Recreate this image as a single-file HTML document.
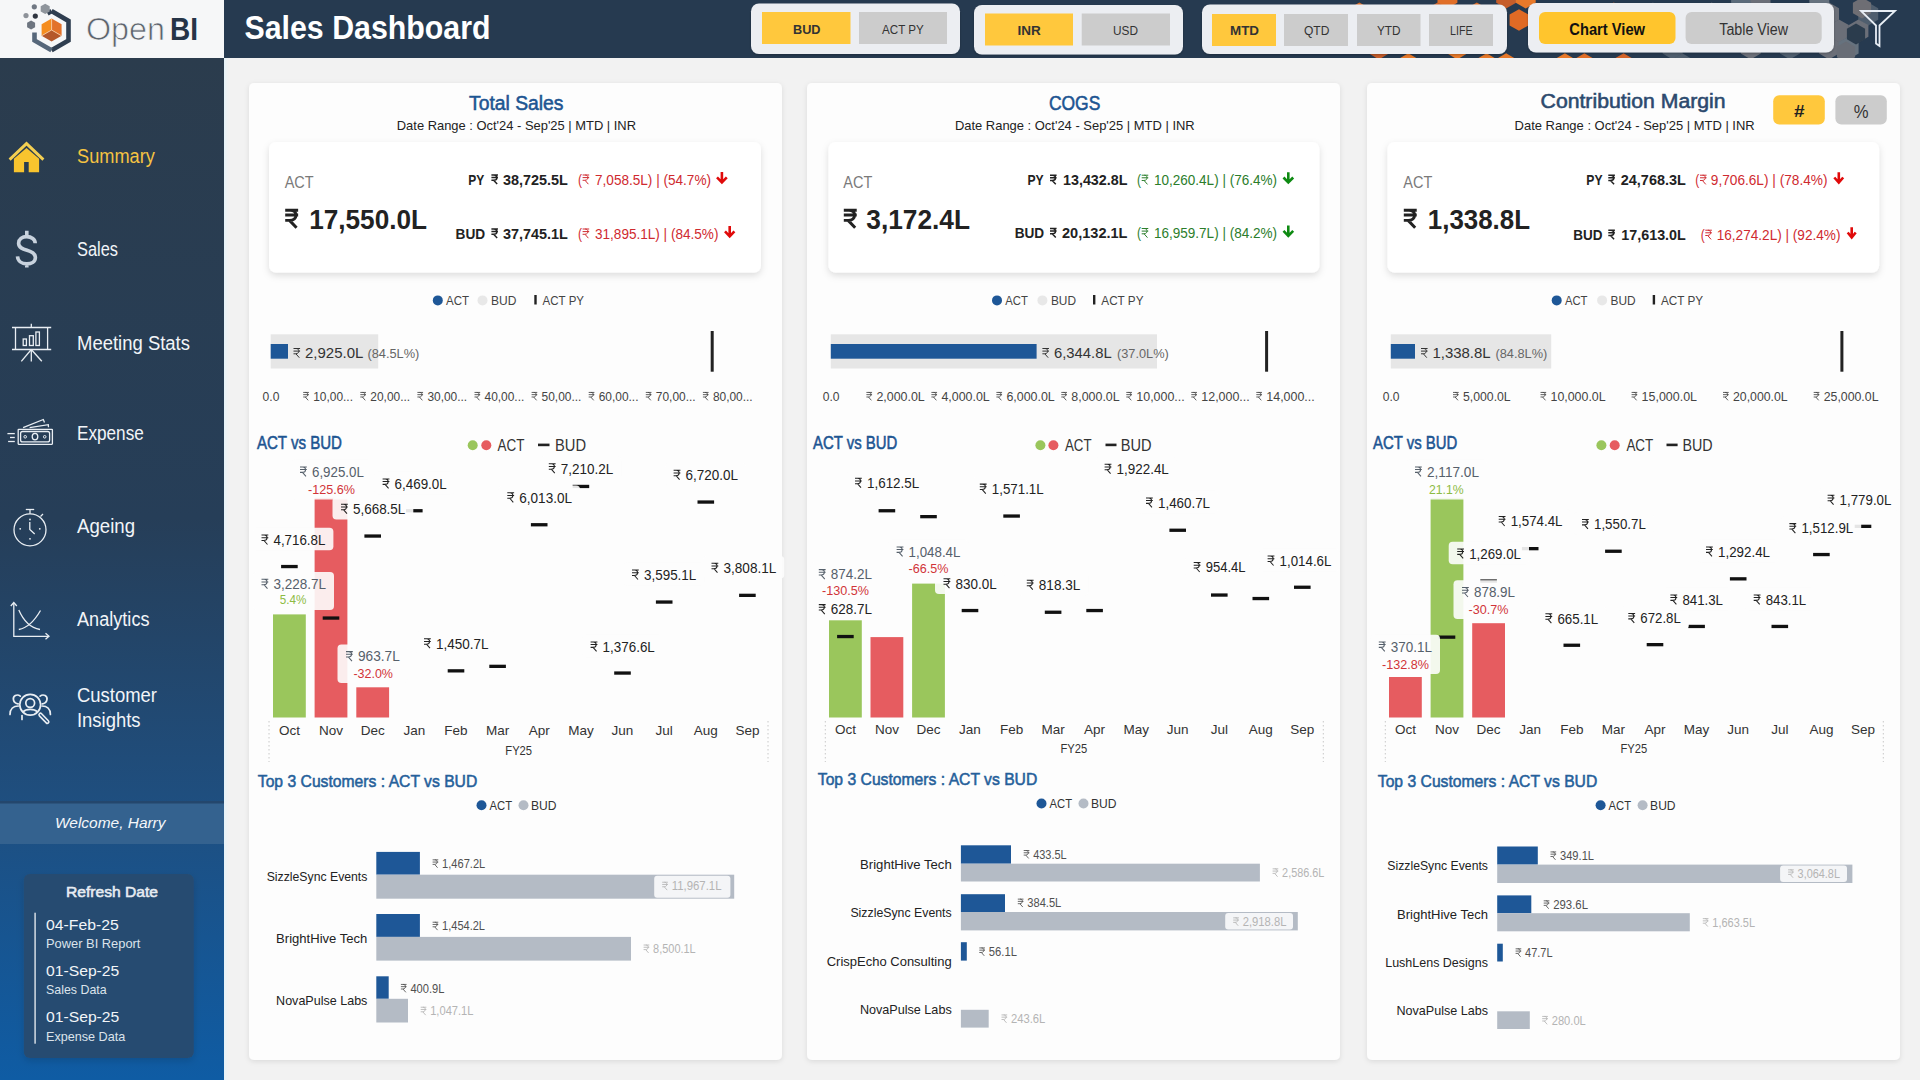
<!DOCTYPE html><html><head><meta charset="utf-8"><title>Sales Dashboard</title>
<style>html,body{margin:0;padding:0;width:1920px;height:1080px;overflow:hidden;background:#f2f2f2}svg{display:block;font-family:"Liberation Sans",sans-serif}</style></head><body>
<svg width="1920" height="1080" viewBox="0 0 1920 1080">
<defs>
<symbol id="rr" viewBox="0 0 66 100" overflow="visible"><path d="M0,5 H66 M0,31 H66 M26,5 C64,5 64,58 22,58 H0 M24,58 L58,97" fill="none" stroke="currentColor" stroke-width="10"/></symbol>
<symbol id="rb" viewBox="0 0 66 100" overflow="visible"><path d="M0,6 H66 M0,31 H66 M26,6 C66,6 66,58 22,58 H0 M22,58 L58,96" fill="none" stroke="currentColor" stroke-width="15"/></symbol>
<linearGradient id="sbg" x1="0" y1="0" x2="0" y2="1"><stop offset="0" stop-color="#2b3c4d"/><stop offset="0.45" stop-color="#263e58"/><stop offset="0.72" stop-color="#1f4e7e"/><stop offset="1" stop-color="#0f5ca4"/></linearGradient>
<filter id="csh" x="-5%" y="-5%" width="110%" height="110%"><feDropShadow dx="0" dy="1.5" stdDeviation="2.5" flood-color="#000" flood-opacity="0.10"/></filter>
<filter id="ksh" x="-5%" y="-10%" width="110%" height="125%"><feDropShadow dx="0" dy="3" stdDeviation="3.5" flood-color="#000" flood-opacity="0.13"/></filter>
<filter id="gsh" x="-5%" y="-10%" width="110%" height="130%"><feDropShadow dx="0" dy="1" stdDeviation="1.2" flood-color="#000" flood-opacity="0.25"/></filter>
<clipPath id="hclip"><rect x="0" y="0" width="1920" height="58"/></clipPath>
</defs>
<rect x="0.0" y="0.0" width="1920.0" height="1080.0" fill="#f2f2f2"/>
<rect x="0.0" y="0.0" width="1920.0" height="58.0" fill="#263a50"/>
<g clip-path="url(#hclip)">
<polygon points="1457.4,2.7 1447.4,8.5 1437.5,2.7 1437.5,-8.8 1447.4,-14.5 1457.4,-8.8" fill="#e06e28"/>
<polygon points="1516.1,2.7 1506.1,8.5 1496.2,2.7 1496.2,-8.8 1506.1,-14.5 1516.1,-8.8" fill="#c65d2a"/>
<polygon points="1535.7,2.7 1525.7,8.5 1515.8,2.7 1515.8,-8.8 1525.7,-14.5 1535.7,-8.8" fill="#e8792a"/>
<polygon points="1751.0,2.7 1741.0,8.5 1731.1,2.7 1731.1,-8.8 1741.0,-14.5 1751.0,-8.8" fill="#5b6b7b"/>
<polygon points="1770.5,2.7 1760.6,8.5 1750.6,2.7 1750.6,-8.8 1760.6,-14.5 1770.5,-8.8" fill="#6b6f78"/>
<polygon points="1829.3,2.7 1819.3,8.5 1809.3,2.7 1809.3,-8.8 1819.3,-14.5 1829.3,-8.8" fill="#66727e"/>
<polygon points="1369.3,19.7 1359.4,25.5 1349.4,19.7 1349.4,8.2 1359.4,2.5 1369.3,8.2" fill="#e06e28"/>
<polygon points="1447.6,19.7 1437.6,25.5 1427.7,19.7 1427.7,8.2 1437.6,2.5 1447.6,8.2" fill="#d4642a"/>
<polygon points="1486.8,19.7 1476.8,25.5 1466.8,19.7 1466.8,8.2 1476.8,2.5 1486.8,8.2" fill="#e06e28"/>
<polygon points="1623.8,19.7 1613.8,25.5 1603.8,19.7 1603.8,8.2 1613.8,2.5 1623.8,8.2" fill="#d4642a"/>
<polygon points="1662.9,19.7 1652.9,25.5 1643.0,19.7 1643.0,8.2 1652.9,2.5 1662.9,8.2" fill="#4f5e6e"/>
<polygon points="1721.6,19.7 1711.7,25.5 1701.7,19.7 1701.7,8.2 1711.7,2.5 1721.6,8.2" fill="#6b6f78"/>
<polygon points="1760.8,19.7 1750.8,25.5 1740.8,19.7 1740.8,8.2 1750.8,2.5 1760.8,8.2" fill="#5b6b7b"/>
<polygon points="1780.3,19.7 1770.4,25.5 1760.4,19.7 1760.4,8.2 1770.4,2.5 1780.3,8.2" fill="#5b6b7b"/>
<polygon points="1839.0,19.7 1829.1,25.5 1819.1,19.7 1819.1,8.2 1829.1,2.5 1839.0,8.2" fill="#6b6f78"/>
<polygon points="1878.2,19.7 1868.2,25.5 1858.3,19.7 1858.3,8.2 1868.2,2.5 1878.2,8.2" fill="#4f5e6e"/>
<polygon points="1359.5,36.7 1349.6,42.4 1339.6,36.7 1339.6,25.2 1349.6,19.4 1359.5,25.1" fill="#d4642a"/>
<polygon points="1457.4,36.7 1447.4,42.4 1437.5,36.7 1437.5,25.2 1447.4,19.4 1457.4,25.1" fill="#e06e28"/>
<polygon points="1477.0,36.7 1467.0,42.4 1457.0,36.7 1457.0,25.2 1467.0,19.4 1477.0,25.1" fill="#e8792a"/>
<polygon points="1496.5,36.7 1486.6,42.4 1476.6,36.7 1476.6,25.2 1486.6,19.4 1496.5,25.1" fill="#c65d2a"/>
<polygon points="1574.8,36.7 1564.9,42.4 1554.9,36.7 1554.9,25.2 1564.9,19.4 1574.8,25.1" fill="#d4642a"/>
<polygon points="1594.4,36.7 1584.4,42.4 1574.5,36.7 1574.5,25.2 1584.4,19.4 1594.4,25.1" fill="#ee8a2c"/>
<polygon points="1614.0,36.7 1604.0,42.4 1594.1,36.7 1594.1,25.2 1604.0,19.4 1614.0,25.1" fill="#e06e28"/>
<polygon points="1653.1,36.7 1643.2,42.4 1633.2,36.7 1633.2,25.2 1643.2,19.4 1653.1,25.1" fill="#5b6b7b"/>
<polygon points="1672.7,36.7 1662.7,42.4 1652.8,36.7 1652.8,25.2 1662.7,19.4 1672.7,25.1" fill="#6b6f78"/>
<polygon points="1711.8,36.7 1701.9,42.4 1691.9,36.7 1691.9,25.2 1701.9,19.4 1711.8,25.1" fill="#66727e"/>
<polygon points="1731.4,36.7 1721.4,42.4 1711.5,36.7 1711.5,25.2 1721.4,19.4 1731.4,25.1" fill="#66727e"/>
<polygon points="1848.8,36.7 1838.9,42.4 1828.9,36.7 1828.9,25.2 1838.9,19.4 1848.8,25.1" fill="#6b6f78"/>
<polygon points="1868.4,36.7 1858.4,42.4 1848.5,36.7 1848.5,25.2 1858.4,19.4 1868.4,25.1" fill="#6b6f78"/>
<polygon points="1388.9,53.6 1378.9,59.4 1369.0,53.6 1369.0,42.1 1378.9,36.4 1388.9,42.1" fill="#c65d2a"/>
<polygon points="1467.2,53.6 1457.2,59.4 1447.3,53.6 1447.3,42.1 1457.2,36.4 1467.2,42.1" fill="#e8792a"/>
<polygon points="1682.5,53.6 1672.5,59.4 1662.6,53.6 1662.6,42.1 1672.5,36.4 1682.5,42.1" fill="#4f5e6e"/>
<polygon points="1760.8,53.6 1750.8,59.4 1740.8,53.6 1740.8,42.1 1750.8,36.4 1760.8,42.1" fill="#6b6f78"/>
<polygon points="1799.9,53.6 1789.9,59.4 1780.0,53.6 1780.0,42.1 1789.9,36.4 1799.9,42.1" fill="#4f5e6e"/>
<polygon points="1839.0,53.6 1829.1,59.4 1819.1,53.6 1819.1,42.1 1829.1,36.4 1839.0,42.1" fill="#6b6f78"/>
<polygon points="1858.6,53.6 1848.7,59.4 1838.7,53.6 1838.7,42.1 1848.7,36.4 1858.6,42.1" fill="#66727e"/>
<polygon points="1418.2,70.6 1408.3,76.3 1398.3,70.6 1398.3,59.1 1408.3,53.3 1418.2,59.1" fill="#e8792a"/>
<polygon points="1496.5,70.6 1486.6,76.3 1476.6,70.6 1476.6,59.1 1486.6,53.3 1496.5,59.1" fill="#e8792a"/>
<polygon points="1516.1,70.6 1506.1,76.3 1496.2,70.6 1496.2,59.1 1506.1,53.3 1516.1,59.1" fill="#e8792a"/>
<polygon points="1574.8,70.6 1564.9,76.3 1554.9,70.6 1554.9,59.1 1564.9,53.3 1574.8,59.1" fill="#e8792a"/>
<polygon points="1594.4,70.6 1584.4,76.3 1574.5,70.6 1574.5,59.1 1584.4,53.3 1594.4,59.1" fill="#e06e28"/>
<polygon points="1633.5,70.6 1623.6,76.3 1613.6,70.6 1613.6,59.1 1623.6,53.3 1633.5,59.1" fill="#d4642a"/>
<polygon points="1692.3,70.6 1682.3,76.3 1672.3,70.6 1672.3,59.1 1682.3,53.3 1692.3,59.1" fill="#4f5e6e"/>
<polygon points="1528.4,25.4 1519.0,30.8 1509.6,25.4 1509.6,14.6 1519.0,9.2 1528.4,14.6" fill="#e06a25"/>
<polygon points="1865.1,39.2 1856.0,44.5 1846.9,39.2 1846.9,28.8 1856.0,23.5 1865.1,28.7" fill="#2b3c4d"/>
<polygon points="1871.1,13.2 1862.0,18.5 1852.9,13.2 1852.9,2.7 1862.0,-2.5 1871.1,2.7" fill="#6e6e74"/>
<polygon points="1855.1,57.2 1846.0,62.5 1836.9,57.2 1836.9,46.8 1846.0,41.5 1855.1,46.7" fill="#686d76"/>
</g>
<rect x="0.0" y="0.0" width="224.0" height="58.0" fill="#f6f7f8"/>
<polyline points="51.5,11.1 68.5,20.9 68.5,40.5 51.5,50.3" fill="none" stroke="#2f3e50" stroke-width="4.6" stroke-linejoin="miter"/>
<polyline points="51.5,50.3 34.5,40.5 34.5,32.5" fill="none" stroke="#56677a" stroke-width="4.6" stroke-linejoin="miter"/>
<line x1="51.5" y1="11.1" x2="47.5" y2="13.4" stroke="#2f3e50" stroke-width="4.6"/>
<polygon points="51.6,18.4 51.6,30.0 41.6,35.8 41.6,24.2" fill="#f58d1f"/>
<polygon points="51.6,18.4 61.6,24.2 61.6,35.8 51.6,30.0" fill="#e2722a"/>
<polygon points="51.6,30.0 61.6,35.8 51.6,41.6 41.6,35.8" fill="#b5582b"/>
<polyline points="51.6,18.4 51.6,30.0 41.6,35.8" fill="none" stroke="#f6c9a0" stroke-width="0.9"/><line x1="51.6" y1="30.0" x2="61.6" y2="35.8" stroke="#f6c9a0" stroke-width="0.9"/>
<circle cx="34.3" cy="6.8" r="2.6" fill="#707883"/>
<circle cx="26" cy="15.6" r="2.6" fill="#8d9299"/>
<circle cx="35.3" cy="16.1" r="2.6" fill="#2f3540"/>
<polygon points="49.7,11.5 45.2,14.1 40.7,11.5 40.7,6.3 45.2,3.7 49.7,6.3" fill="#8f959c"/>
<polygon points="35.1,27.3 31.1,29.6 27.1,27.3 27.1,22.7 31.1,20.4 35.1,22.7" fill="#6d7580"/>
<text x="86.0" y="40.0" font-size="31" fill="#5d646d" textLength="79.0" lengthAdjust="spacingAndGlyphs" stroke="#f6f7f8" stroke-width="0.7">Open</text>
<text x="170.0" y="40.0" font-size="31" fill="#263447" font-weight="bold" textLength="28.0" lengthAdjust="spacingAndGlyphs">BI</text>
<text x="244.5" y="38.8" font-size="34" fill="#ffffff" font-weight="bold" textLength="246.0" lengthAdjust="spacingAndGlyphs">Sales Dashboard</text>
<rect x="751.0" y="3.5" width="209.0" height="50.5" fill="#eceef2" rx="8" filter="url(#gsh)"/>
<rect x="762.0" y="12.0" width="88.5" height="32.0" fill="#ffc83d"/>
<text x="793.0" y="34.3" font-size="13.5" fill="#333" font-weight="bold" textLength="27.5" lengthAdjust="spacingAndGlyphs">BUD</text>
<rect x="859.0" y="12.0" width="88.0" height="32.0" fill="#cccccc"/>
<text x="882.0" y="34.3" font-size="13.5" fill="#333" textLength="41.8" lengthAdjust="spacingAndGlyphs">ACT PY</text>
<rect x="974.0" y="5.0" width="209.0" height="49.5" fill="#eceef2" rx="8" filter="url(#gsh)"/>
<rect x="985.0" y="13.5" width="88.0" height="32.0" fill="#ffc83d"/>
<text x="1017.5" y="35.0" font-size="13.5" fill="#333" font-weight="bold" textLength="23.3" lengthAdjust="spacingAndGlyphs">INR</text>
<rect x="1081.7" y="13.5" width="88.3" height="32.0" fill="#cccccc"/>
<text x="1113.0" y="35.0" font-size="13.5" fill="#333" textLength="25.0" lengthAdjust="spacingAndGlyphs">USD</text>
<rect x="1202.0" y="4.5" width="305.0" height="49.5" fill="#eceef2" rx="8" filter="url(#gsh)"/>
<rect x="1212.0" y="14.0" width="64.0" height="32.0" fill="#ffc83d"/>
<text x="1230.0" y="35.0" font-size="13.5" fill="#333" font-weight="bold" textLength="29.0" lengthAdjust="spacingAndGlyphs">MTD</text>
<rect x="1284.0" y="14.0" width="64.0" height="32.0" fill="#cccccc"/>
<text x="1304.0" y="35.0" font-size="13.5" fill="#333" textLength="25.4" lengthAdjust="spacingAndGlyphs">QTD</text>
<rect x="1357.0" y="14.0" width="63.5" height="32.0" fill="#cccccc"/>
<text x="1377.0" y="35.0" font-size="13.5" fill="#333" textLength="23.6" lengthAdjust="spacingAndGlyphs">YTD</text>
<rect x="1429.0" y="14.0" width="64.0" height="32.0" fill="#cccccc"/>
<text x="1450.0" y="35.0" font-size="13.5" fill="#333" textLength="22.6" lengthAdjust="spacingAndGlyphs">LIFE</text>
<rect x="1528.0" y="3.0" width="306.0" height="49.5" fill="#eceef2" rx="8" filter="url(#gsh)"/>
<rect x="1539.0" y="12.0" width="136.5" height="32.0" fill="#ffc52d" rx="6"/>
<text x="1569.3" y="34.5" font-size="16" fill="#111" font-weight="bold" textLength="75.7" lengthAdjust="spacingAndGlyphs">Chart View</text>
<rect x="1685.6" y="12.0" width="136.1" height="32.0" fill="#cccccc" rx="6"/>
<text x="1719.3" y="34.5" font-size="16" fill="#333" textLength="68.7" lengthAdjust="spacingAndGlyphs">Table View</text>
<path d="M1861,11 L1895,11 L1879.5,25.5 L1879.5,46 L1876,43.5 L1876,25.5 Z" fill="none" stroke="#e8eef5" stroke-width="1.8" stroke-linejoin="miter"/>
<linearGradient id="edg" x1="0" y1="0" x2="1" y2="0"><stop offset="0" stop-color="#e4f3fa"/><stop offset="1" stop-color="#f2f2f2" stop-opacity="0"/></linearGradient>
<rect x="224.0" y="58.0" width="6.0" height="1022.0" fill="url(#edg)"/>
<rect x="0.0" y="58.0" width="224.0" height="1022.0" fill="url(#sbg)"/>
<text x="77.0" y="163.0" font-size="19.5" fill="#f5c342" textLength="77.8" lengthAdjust="spacingAndGlyphs">Summary</text>
<text x="77.0" y="255.5" font-size="19.5" fill="#f2f5f8" textLength="41.0" lengthAdjust="spacingAndGlyphs">Sales</text>
<text x="77.0" y="349.5" font-size="19.5" fill="#f2f5f8" textLength="113.0" lengthAdjust="spacingAndGlyphs">Meeting Stats</text>
<text x="77.0" y="440.0" font-size="19.5" fill="#f2f5f8" textLength="66.8" lengthAdjust="spacingAndGlyphs">Expense</text>
<text x="77.0" y="533.0" font-size="19.5" fill="#f2f5f8" textLength="58.0" lengthAdjust="spacingAndGlyphs">Ageing</text>
<text x="77.0" y="626.0" font-size="19.5" fill="#f2f5f8" textLength="72.5" lengthAdjust="spacingAndGlyphs">Analytics</text>
<text x="77.0" y="702.0" font-size="19.5" fill="#f2f5f8" textLength="80.0" lengthAdjust="spacingAndGlyphs">Customer</text>
<text x="77.0" y="727.0" font-size="19.5" fill="#f2f5f8" textLength="63.5" lengthAdjust="spacingAndGlyphs">Insights</text>
<polyline points="9.6,159.6 26.5,143.6 43.4,159.6" fill="none" stroke="#f4cf52" stroke-width="2.9" stroke-linejoin="miter"/>
<path d="M13.9,158.8 L26.5,147.9 L39.1,158.8 L39.1,172.2 L28.7,172.2 L28.7,162.1 L24.1,162.1 L24.1,172.2 L13.9,172.2 Z" fill="#f9c42e"/>
<path d="M35.2,243.3 C35.2,239.4 31.4,236.6 26.8,236.6 C22.2,236.6 18.6,239.3 18.6,243.2 C18.6,247.6 22.8,249 27,250.3 C31.4,251.6 35.4,253.3 35.4,257.6 C35.4,261.6 31.6,263.9 26.8,263.9 C21.8,263.9 17.9,261.2 17.5,256.4 M26.8,230.8 V236.6 M26.8,263.9 V267.6" fill="none" stroke="#c8d2dd" stroke-width="3.6"/>
<g fill="none" stroke="#e9eef3" stroke-width="1.3"><line x1="12" y1="327.5" x2="51.2" y2="327.5"/><line x1="12" y1="349.5" x2="51.2" y2="349.5"/><line x1="15.5" y1="327.5" x2="15.5" y2="349.5"/><line x1="47.6" y1="327.5" x2="47.6" y2="349.5"/><line x1="31.3" y1="323.7" x2="31.3" y2="327.5"/><line x1="31.3" y1="349.5" x2="31.3" y2="361.5"/><line x1="31.3" y1="349.5" x2="21.3" y2="361.3"/><line x1="31.3" y1="349.5" x2="41.8" y2="361.3"/><rect x="23.2" y="339" width="3.2" height="6.5"/><rect x="29.5" y="335.7" width="3.8" height="9.8"/><rect x="35.9" y="332" width="3.5" height="13.5"/></g>
<g fill="none" stroke="#e9eef3" stroke-width="1.3"><rect x="18.2" y="429.3" width="34.2" height="15" rx="0.5"/><rect x="20.6" y="431.5" width="29" height="10.4" rx="2"/><ellipse cx="35" cy="436.6" rx="2.8" ry="3.3"/><polyline points="23.1,427.6 43.3,419.5 44.5,422.5"/><polyline points="29.6,427.6 48.3,424.7 48.5,427.2"/><line x1="7.4" y1="433.6" x2="14.8" y2="433.6"/><line x1="10" y1="437.5" x2="14.8" y2="437.5"/><line x1="8.1" y1="441.5" x2="14.8" y2="441.5"/></g>
<circle cx="25.2" cy="436.8" r="1.3" fill="none" stroke="#e9eef3" stroke-width="1"/><circle cx="44.7" cy="436.8" r="1.3" fill="none" stroke="#e9eef3" stroke-width="1"/>
<g fill="none" stroke="#e9eef3" stroke-width="1.3"><circle cx="30" cy="529.8" r="16"/><line x1="30" y1="509.5" x2="30" y2="513.8"/><line x1="25.8" y1="509.5" x2="34.2" y2="509.5"/><line x1="40.5" y1="516.5" x2="43" y2="514"/><polyline points="29.8,522 29.8,529.5 34.7,534"/></g>
<circle cx="30" cy="519.5" r="0.9" fill="#e9eef3"/>
<circle cx="20.2" cy="528.8" r="0.9" fill="#e9eef3"/>
<circle cx="39.8" cy="528.8" r="0.9" fill="#e9eef3"/>
<circle cx="30" cy="538.8" r="0.9" fill="#e9eef3"/>
<g fill="none" stroke="#e9eef3" stroke-width="1.3"><polyline points="13.8,603 13.8,636.3 48.5,636.3"/><polyline points="10.8,606 13.8,602.5 16.8,606"/><polyline points="45.5,633.3 49,636.3 45.5,639.3"/><path d="M18.8,610 C24,622 31,628 40,629.5"/><path d="M18.8,629.5 C28,628 35,620 40.5,610.5"/></g>
<g fill="none" stroke="#e9eef3" stroke-width="1.7" stroke-linecap="round"><circle cx="30.2" cy="704.8" r="10.4"/><circle cx="30.2" cy="703" r="4.4"/><path d="M23.2,711.6 C26,708.6 34.4,708.6 37.2,711.6"/><path d="M20.3,696.2 C17,693.5 12.5,696 13.5,700 C14,702.5 16.5,704 18.2,703.8"/><path d="M40.1,696.2 C43.4,693.5 47.9,696 46.9,700 C46.4,702.5 43.9,704 42.2,703.8"/><path d="M10,714.5 C10,709 13.5,706 18.3,706"/><path d="M50.4,714.5 C50.4,709 46.9,706 42.1,706"/><line x1="22" y1="715.5" x2="22" y2="719.5"/></g>
<line x1="40.5" y1="714.8" x2="47.3" y2="721.8" stroke="#e9eef3" stroke-width="4.6" stroke-linecap="round"/>
<line x1="40.5" y1="714.8" x2="47.3" y2="721.8" stroke="#204a78" stroke-width="1.4" stroke-linecap="round"/>
<rect x="0.0" y="803.0" width="224.0" height="41.0" fill="#34628f"/>
<rect x="0.0" y="801.0" width="224.0" height="2.5" fill="#24476d"/>
<text x="55.0" y="828.0" font-size="15" fill="#f4f7fa" font-style="italic" textLength="110.5" lengthAdjust="spacingAndGlyphs">Welcome, Harry</text>
<rect x="23.8" y="874.0" width="170.0" height="184.0" fill="#284c71" rx="6" filter="url(#ksh)"/>
<text x="66.0" y="897.0" font-size="15" fill="#e6ecf2" stroke="#e6ecf2" stroke-width="0.55" textLength="92.0" lengthAdjust="spacingAndGlyphs">Refresh Date</text>
<rect x="34.3" y="912.7" width="1.6" height="131.0" fill="#c9d3dd"/>
<text x="46.0" y="930.2" font-size="15.5" fill="#f2f5f8" textLength="72.7" lengthAdjust="spacingAndGlyphs">04-Feb-25</text>
<text x="46.0" y="948.4" font-size="13" fill="#dbe3eb" textLength="94.4" lengthAdjust="spacingAndGlyphs">Power BI Report</text>
<text x="46.0" y="976.0" font-size="15.5" fill="#f2f5f8" textLength="73.3" lengthAdjust="spacingAndGlyphs">01-Sep-25</text>
<text x="46.0" y="994.0" font-size="13" fill="#dbe3eb" textLength="60.6" lengthAdjust="spacingAndGlyphs">Sales Data</text>
<text x="46.0" y="1022.0" font-size="15.5" fill="#f2f5f8" textLength="73.3" lengthAdjust="spacingAndGlyphs">01-Sep-25</text>
<text x="46.0" y="1040.5" font-size="13" fill="#dbe3eb" textLength="79.2" lengthAdjust="spacingAndGlyphs">Expense Data</text>
<rect x="249.0" y="83.0" width="533.0" height="977.0" fill="#fdfdfd" rx="5" filter="url(#csh)"/>
<text x="469.0" y="109.6" font-size="20" fill="#1d5592" stroke="#1d5592" stroke-width="0.55" textLength="94.5" lengthAdjust="spacingAndGlyphs">Total Sales</text>
<text x="396.8" y="129.8" font-size="13.5" fill="#222" textLength="239.2" lengthAdjust="spacingAndGlyphs">Date Range : Oct'24 - Sep'25 | MTD | INR</text>
<rect x="269.0" y="142.0" width="492.0" height="130.5" fill="#ffffff" rx="7" filter="url(#ksh)"/>
<text x="284.7" y="188.2" font-size="16" fill="#7a7a7a" textLength="29.0" lengthAdjust="spacingAndGlyphs">ACT</text>
<use href="#rb" x="285.2" y="209.0" width="12.94" height="19.61" style="color:#222"/>
<text x="309.2" y="228.6" font-size="28.5" fill="#222" font-weight="bold" textLength="117.8" lengthAdjust="spacingAndGlyphs">17,550.0L</text>
<text x="468.3" y="184.5" font-size="14.5" fill="#222" font-weight="bold" textLength="16.0" lengthAdjust="spacingAndGlyphs">PY</text>
<use href="#rb" x="491.4" y="174.5" width="6.58" height="9.98" style="color:#222"/>
<text x="502.9" y="184.5" font-size="14.5" fill="#222" font-weight="bold" textLength="65.0" lengthAdjust="spacingAndGlyphs">38,725.5L</text>
<text x="578.0" y="184.5" font-size="14.5" fill="#cf2a30" textLength="4.0" lengthAdjust="spacingAndGlyphs">(</text>
<use href="#rr" x="582.6" y="174.5" width="6.58" height="9.98" style="color:#cf2a30"/>
<text x="595.0" y="184.5" font-size="14.5" fill="#cf2a30" textLength="116.0" lengthAdjust="spacingAndGlyphs">7,058.5L) | (54.7%)</text>
<path d="M721.9,172.0 L721.9,182.5 M717.0,177.3 L721.9,182.3 L726.8,177.3" fill="none" stroke="#e00a0a" stroke-width="2.6"/>
<text x="455.6" y="238.5" font-size="14.5" fill="#222" font-weight="bold" textLength="29.6" lengthAdjust="spacingAndGlyphs">BUD</text>
<use href="#rb" x="491.4" y="228.5" width="6.58" height="9.98" style="color:#222"/>
<text x="502.9" y="238.5" font-size="14.5" fill="#222" font-weight="bold" textLength="65.0" lengthAdjust="spacingAndGlyphs">37,745.1L</text>
<text x="578.0" y="238.5" font-size="14.5" fill="#cf2a30" textLength="4.0" lengthAdjust="spacingAndGlyphs">(</text>
<use href="#rr" x="582.6" y="228.5" width="6.58" height="9.98" style="color:#cf2a30"/>
<text x="595.0" y="238.5" font-size="14.5" fill="#cf2a30" textLength="123.4" lengthAdjust="spacingAndGlyphs">31,895.1L) | (84.5%)</text>
<path d="M729.7,226.0 L729.7,236.5 M725.0,231.3 L729.7,236.3 L734.4,231.3" fill="none" stroke="#e00a0a" stroke-width="2.6"/>
<circle cx="437.8" cy="300.4" r="5" fill="#1e5797"/>
<text x="446.0" y="305.3" font-size="13" fill="#444" textLength="23.0" lengthAdjust="spacingAndGlyphs">ACT</text>
<circle cx="482.5" cy="300.4" r="5" fill="#e8e8e8"/>
<text x="491.0" y="305.3" font-size="13" fill="#444" textLength="25.4" lengthAdjust="spacingAndGlyphs">BUD</text>
<rect x="534.3" y="295.0" width="2.4" height="9.5" fill="#222"/>
<text x="542.6" y="305.3" font-size="13" fill="#444" textLength="41.4" lengthAdjust="spacingAndGlyphs">ACT PY</text>
<rect x="270.7" y="334.3" width="107.5" height="34.2" fill="#e6e6e6"/>
<rect x="270.7" y="344.0" width="17.3" height="14.7" fill="#1e5797"/>
<use href="#rr" x="293.5" y="348.0" width="6.58" height="9.98" style="color:#333"/>
<text x="305.0" y="358.0" font-size="14.5" fill="#333" textLength="58.3" lengthAdjust="spacingAndGlyphs">2,925.0L</text>
<text x="367.4" y="358.0" font-size="12.5" fill="#666" textLength="52.0" lengthAdjust="spacingAndGlyphs">(84.5L%)</text>
<rect x="710.7" y="331.0" width="3.0" height="40.7" fill="#222"/>
<text x="262.6" y="400.6" font-size="12.5" fill="#444" textLength="16.8" lengthAdjust="spacingAndGlyphs">0.0</text>
<use href="#rr" x="303.2" y="392.0" width="5.68" height="8.60" style="color:#444"/>
<text x="313.2" y="400.6" font-size="12.5" fill="#444" textLength="39.8" lengthAdjust="spacingAndGlyphs">10,00...</text>
<use href="#rr" x="360.3" y="392.0" width="5.68" height="8.60" style="color:#444"/>
<text x="370.3" y="400.6" font-size="12.5" fill="#444" textLength="39.8" lengthAdjust="spacingAndGlyphs">20,00...</text>
<use href="#rr" x="417.4" y="392.0" width="5.68" height="8.60" style="color:#444"/>
<text x="427.4" y="400.6" font-size="12.5" fill="#444" textLength="39.8" lengthAdjust="spacingAndGlyphs">30,00...</text>
<use href="#rr" x="474.5" y="392.0" width="5.68" height="8.60" style="color:#444"/>
<text x="484.5" y="400.6" font-size="12.5" fill="#444" textLength="39.8" lengthAdjust="spacingAndGlyphs">40,00...</text>
<use href="#rr" x="531.6" y="392.0" width="5.68" height="8.60" style="color:#444"/>
<text x="541.6" y="400.6" font-size="12.5" fill="#444" textLength="39.8" lengthAdjust="spacingAndGlyphs">50,00...</text>
<use href="#rr" x="588.7" y="392.0" width="5.68" height="8.60" style="color:#444"/>
<text x="598.7" y="400.6" font-size="12.5" fill="#444" textLength="39.8" lengthAdjust="spacingAndGlyphs">60,00...</text>
<use href="#rr" x="645.8" y="392.0" width="5.68" height="8.60" style="color:#444"/>
<text x="655.8" y="400.6" font-size="12.5" fill="#444" textLength="39.8" lengthAdjust="spacingAndGlyphs">70,00...</text>
<use href="#rr" x="702.9" y="392.0" width="5.68" height="8.60" style="color:#444"/>
<text x="712.9" y="400.6" font-size="12.5" fill="#444" textLength="39.8" lengthAdjust="spacingAndGlyphs">80,00...</text>
<text x="256.9" y="449.1" font-size="18" fill="#1d5592" stroke="#1d5592" stroke-width="0.55" textLength="85.1" lengthAdjust="spacingAndGlyphs">ACT vs BUD</text>
<circle cx="472.7" cy="445.3" r="5" fill="#9ac65c"/><circle cx="486.3" cy="445.3" r="5" fill="#e65c60"/>
<text x="497.6" y="451.3" font-size="16" fill="#333" textLength="26.9" lengthAdjust="spacingAndGlyphs">ACT</text>
<rect x="538.0" y="443.6" width="11.5" height="2.6" fill="#222"/>
<text x="555.0" y="451.3" font-size="16" fill="#333" textLength="31.0" lengthAdjust="spacingAndGlyphs">BUD</text>
<rect x="273.0" y="614.4" width="32.8" height="103.1" fill="#9ac65c"/>
<rect x="314.6" y="497.8" width="32.8" height="219.7" fill="#e65c60"/>
<rect x="356.3" y="687.3" width="32.8" height="30.2" fill="#e65c60"/>
<rect x="281.1" y="564.9" width="16.6" height="3.3" fill="#111"/>
<rect x="322.7" y="616.4" width="16.6" height="3.3" fill="#111"/>
<rect x="364.4" y="534.4" width="16.6" height="3.3" fill="#111"/>
<rect x="406.0" y="509.1" width="16.6" height="3.3" fill="#111"/>
<rect x="447.7" y="669.2" width="16.6" height="3.3" fill="#111"/>
<rect x="489.3" y="664.7" width="16.6" height="3.3" fill="#111"/>
<rect x="530.9" y="523.1" width="16.6" height="3.3" fill="#111"/>
<rect x="572.6" y="484.8" width="16.6" height="3.3" fill="#111"/>
<rect x="614.2" y="671.4" width="16.6" height="3.3" fill="#111"/>
<rect x="655.9" y="600.4" width="16.6" height="3.3" fill="#111"/>
<rect x="697.5" y="500.4" width="16.6" height="3.3" fill="#111"/>
<rect x="739.1" y="593.7" width="16.6" height="3.3" fill="#111"/>
<rect x="253.0" y="527.8" width="80.4" height="22.5" fill="#fdfdfd" rx="4" fill-opacity="0.9"/>
<rect x="253.0" y="572.0" width="81.0" height="37.9" fill="#fdfdfd" rx="4" fill-opacity="0.9"/>
<rect x="291.5" y="459.7" width="80.3" height="39.7" fill="#fdfdfd" rx="4" fill-opacity="0.9"/>
<rect x="332.5" y="497.0" width="80.8" height="22.5" fill="#fdfdfd" rx="4" fill-opacity="0.9"/>
<rect x="374.1" y="471.7" width="80.6" height="22.5" fill="#fdfdfd" rx="4" fill-opacity="0.9"/>
<rect x="337.5" y="644.4" width="70.3" height="38.7" fill="#fdfdfd" rx="4" fill-opacity="0.9"/>
<rect x="415.5" y="631.5" width="81.0" height="22.5" fill="#fdfdfd" rx="4" fill-opacity="0.9"/>
<rect x="498.8" y="485.6" width="81.2" height="22.5" fill="#fdfdfd" rx="4" fill-opacity="0.9"/>
<rect x="540.3" y="456.5" width="81.0" height="22.5" fill="#fdfdfd" rx="4" fill-opacity="0.9"/>
<rect x="582.1" y="634.7" width="80.7" height="22.5" fill="#fdfdfd" rx="4" fill-opacity="0.9"/>
<rect x="623.5" y="562.8" width="80.8" height="22.5" fill="#fdfdfd" rx="4" fill-opacity="0.9"/>
<rect x="665.1" y="463.0" width="80.9" height="22.5" fill="#fdfdfd" rx="4" fill-opacity="0.9"/>
<rect x="703.0" y="556.0" width="81.3" height="22.5" fill="#fdfdfd" rx="4" fill-opacity="0.9"/>
<use href="#rr" x="261.5" y="534.5" width="6.81" height="10.32" style="color:#222"/>
<text x="273.5" y="544.8" font-size="15" fill="#222" textLength="51.9" lengthAdjust="spacingAndGlyphs">4,716.8L</text>
<use href="#rr" x="261.5" y="578.7" width="6.81" height="10.32" style="color:#56606b"/>
<text x="273.5" y="589.0" font-size="15" fill="#56606b" textLength="52.5" lengthAdjust="spacingAndGlyphs">3,228.7L</text>
<text x="279.8" y="604.4" font-size="13.5" fill="#8dbb43" textLength="26.6" lengthAdjust="spacingAndGlyphs">5.4%</text>
<use href="#rr" x="300.0" y="466.4" width="6.81" height="10.32" style="color:#56606b"/>
<text x="312.0" y="476.7" font-size="15" fill="#56606b" textLength="51.8" lengthAdjust="spacingAndGlyphs">6,925.0L</text>
<text x="308.0" y="493.9" font-size="13.5" fill="#d13438" textLength="47.0" lengthAdjust="spacingAndGlyphs">-125.6%</text>
<use href="#rr" x="341.0" y="503.7" width="6.81" height="10.32" style="color:#222"/>
<text x="353.0" y="514.0" font-size="15" fill="#222" textLength="52.3" lengthAdjust="spacingAndGlyphs">5,668.5L</text>
<use href="#rr" x="382.6" y="478.4" width="6.81" height="10.32" style="color:#222"/>
<text x="394.6" y="488.7" font-size="15" fill="#222" textLength="52.1" lengthAdjust="spacingAndGlyphs">6,469.0L</text>
<use href="#rr" x="346.0" y="651.1" width="6.81" height="10.32" style="color:#56606b"/>
<text x="358.0" y="661.4" font-size="15" fill="#56606b" textLength="41.8" lengthAdjust="spacingAndGlyphs">963.7L</text>
<text x="353.4" y="677.6" font-size="13.5" fill="#d13438" textLength="39.6" lengthAdjust="spacingAndGlyphs">-32.0%</text>
<use href="#rr" x="424.0" y="638.2" width="6.81" height="10.32" style="color:#222"/>
<text x="436.0" y="648.5" font-size="15" fill="#222" textLength="52.5" lengthAdjust="spacingAndGlyphs">1,450.7L</text>
<use href="#rr" x="507.3" y="492.3" width="6.81" height="10.32" style="color:#222"/>
<text x="519.3" y="502.6" font-size="15" fill="#222" textLength="52.7" lengthAdjust="spacingAndGlyphs">6,013.0L</text>
<use href="#rr" x="548.8" y="463.2" width="6.81" height="10.32" style="color:#222"/>
<text x="560.8" y="473.5" font-size="15" fill="#222" textLength="52.5" lengthAdjust="spacingAndGlyphs">7,210.2L</text>
<use href="#rr" x="590.6" y="641.4" width="6.81" height="10.32" style="color:#222"/>
<text x="602.6" y="651.7" font-size="15" fill="#222" textLength="52.2" lengthAdjust="spacingAndGlyphs">1,376.6L</text>
<use href="#rr" x="632.0" y="569.5" width="6.81" height="10.32" style="color:#222"/>
<text x="644.0" y="579.8" font-size="15" fill="#222" textLength="52.3" lengthAdjust="spacingAndGlyphs">3,595.1L</text>
<use href="#rr" x="673.6" y="469.7" width="6.81" height="10.32" style="color:#222"/>
<text x="685.6" y="480.0" font-size="15" fill="#222" textLength="52.4" lengthAdjust="spacingAndGlyphs">6,720.0L</text>
<use href="#rr" x="711.5" y="562.7" width="6.81" height="10.32" style="color:#222"/>
<text x="723.5" y="573.0" font-size="15" fill="#222" textLength="52.8" lengthAdjust="spacingAndGlyphs">3,808.1L</text>
<text x="289.4" y="735.0" font-size="13.5" fill="#333" text-anchor="middle">Oct</text>
<text x="331.0" y="735.0" font-size="13.5" fill="#333" text-anchor="middle">Nov</text>
<text x="372.7" y="735.0" font-size="13.5" fill="#333" text-anchor="middle">Dec</text>
<text x="414.3" y="735.0" font-size="13.5" fill="#333" text-anchor="middle">Jan</text>
<text x="456.0" y="735.0" font-size="13.5" fill="#333" text-anchor="middle">Feb</text>
<text x="497.6" y="735.0" font-size="13.5" fill="#333" text-anchor="middle">Mar</text>
<text x="539.2" y="735.0" font-size="13.5" fill="#333" text-anchor="middle">Apr</text>
<text x="580.9" y="735.0" font-size="13.5" fill="#333" text-anchor="middle">May</text>
<text x="622.5" y="735.0" font-size="13.5" fill="#333" text-anchor="middle">Jun</text>
<text x="664.2" y="735.0" font-size="13.5" fill="#333" text-anchor="middle">Jul</text>
<text x="705.8" y="735.0" font-size="13.5" fill="#333" text-anchor="middle">Aug</text>
<text x="747.4" y="735.0" font-size="13.5" fill="#333" text-anchor="middle">Sep</text>
<text x="518.7" y="754.5" font-size="13.5" fill="#333" text-anchor="middle" textLength="26.8" lengthAdjust="spacingAndGlyphs">FY25</text>
<line x1="269" y1="721" x2="269" y2="762" stroke="#c8c8c8" stroke-width="1" stroke-dasharray="1.5,2.5"/>
<line x1="768" y1="721" x2="768" y2="762" stroke="#c8c8c8" stroke-width="1" stroke-dasharray="1.5,2.5"/>
<text x="257.8" y="786.5" font-size="17" fill="#25609a" stroke="#25609a" stroke-width="0.55" textLength="219.5" lengthAdjust="spacingAndGlyphs">Top 3 Customers : ACT vs BUD</text>
<circle cx="481.5" cy="805.3" r="5" fill="#1e5797"/>
<text x="489.5" y="810.2" font-size="13" fill="#333" textLength="22.5" lengthAdjust="spacingAndGlyphs">ACT</text>
<circle cx="523.5" cy="805.3" r="5" fill="#b4bbc5"/>
<text x="531.0" y="810.2" font-size="13" fill="#333" textLength="25.5" lengthAdjust="spacingAndGlyphs">BUD</text>
<text x="266.7" y="880.9" font-size="13.5" fill="#222" textLength="100.7" lengthAdjust="spacingAndGlyphs">SizzleSync Events</text>
<rect x="376.3" y="851.9" width="43.6" height="22.8" fill="#1e5797"/>
<use href="#rr" x="432.6" y="859.4" width="5.68" height="8.60" style="color:#505050"/>
<text x="442.1" y="868.0" font-size="12.5" fill="#505050" textLength="43.2" lengthAdjust="spacingAndGlyphs">1,467.2L</text>
<rect x="376.3" y="874.7" width="357.9" height="24.0" fill="#b4bbc5"/>
<rect x="654.2" y="875.7" width="76.2" height="22.0" fill="#ffffff" rx="3" fill-opacity="0.85"/>
<use href="#rr" x="662.2" y="881.8" width="5.68" height="8.60" style="color:#b4b4b4"/>
<text x="671.7" y="890.4" font-size="12.5" fill="#b4b4b4" textLength="49.8" lengthAdjust="spacingAndGlyphs">11,967.1L</text>
<text x="276.1" y="943.0" font-size="13.5" fill="#222" textLength="91.3" lengthAdjust="spacingAndGlyphs">BrightHive Tech</text>
<rect x="376.3" y="914.0" width="43.6" height="22.9" fill="#1e5797"/>
<use href="#rr" x="432.6" y="921.8" width="5.68" height="8.60" style="color:#505050"/>
<text x="442.1" y="930.4" font-size="12.5" fill="#505050" textLength="42.9" lengthAdjust="spacingAndGlyphs">1,454.2L</text>
<rect x="376.3" y="936.9" width="254.7" height="23.7" fill="#b4bbc5"/>
<use href="#rr" x="643.6" y="944.6" width="5.68" height="8.60" style="color:#b4b4b4"/>
<text x="653.1" y="953.2" font-size="12.5" fill="#b4b4b4" textLength="42.6" lengthAdjust="spacingAndGlyphs">8,500.1L</text>
<text x="276.1" y="1005.3" font-size="13.5" fill="#222" textLength="91.3" lengthAdjust="spacingAndGlyphs">NovaPulse Labs</text>
<rect x="376.3" y="976.3" width="12.4" height="22.5" fill="#1e5797"/>
<use href="#rr" x="400.9" y="984.0" width="5.68" height="8.60" style="color:#505050"/>
<text x="410.4" y="992.6" font-size="12.5" fill="#505050" textLength="34.0" lengthAdjust="spacingAndGlyphs">400.9L</text>
<rect x="376.3" y="998.8" width="31.7" height="23.7" fill="#b4bbc5"/>
<use href="#rr" x="420.7" y="1006.8" width="5.68" height="8.60" style="color:#b4b4b4"/>
<text x="430.2" y="1015.4" font-size="12.5" fill="#b4b4b4" textLength="43.3" lengthAdjust="spacingAndGlyphs">1,047.1L</text>
<rect x="807.0" y="83.0" width="533.0" height="977.0" fill="#fdfdfd" rx="5" filter="url(#csh)"/>
<text x="1048.9" y="109.5" font-size="20" fill="#1d5592" stroke="#1d5592" stroke-width="0.55" textLength="51.5" lengthAdjust="spacingAndGlyphs">COGS</text>
<text x="954.9" y="130.0" font-size="13.5" fill="#222" textLength="239.8" lengthAdjust="spacingAndGlyphs">Date Range : Oct'24 - Sep'25 | MTD | INR</text>
<rect x="828.5" y="142.0" width="490.9" height="130.5" fill="#ffffff" rx="7" filter="url(#ksh)"/>
<text x="843.3" y="188.2" font-size="16" fill="#7a7a7a" textLength="29.0" lengthAdjust="spacingAndGlyphs">ACT</text>
<use href="#rb" x="843.8" y="209.0" width="12.94" height="19.61" style="color:#222"/>
<text x="866.3" y="228.6" font-size="28.5" fill="#222" font-weight="bold" textLength="103.7" lengthAdjust="spacingAndGlyphs">3,172.4L</text>
<text x="1027.5" y="184.7" font-size="14.5" fill="#222" font-weight="bold" textLength="16.2" lengthAdjust="spacingAndGlyphs">PY</text>
<use href="#rb" x="1050.0" y="174.7" width="6.58" height="9.98" style="color:#222"/>
<text x="1063.0" y="184.7" font-size="14.5" fill="#222" font-weight="bold" textLength="64.5" lengthAdjust="spacingAndGlyphs">13,432.8L</text>
<text x="1137.0" y="184.7" font-size="14.5" fill="#2b7d2b" textLength="4.0" lengthAdjust="spacingAndGlyphs">(</text>
<use href="#rr" x="1141.7" y="174.7" width="6.58" height="9.98" style="color:#2b7d2b"/>
<text x="1154.0" y="184.7" font-size="14.5" fill="#2b7d2b" textLength="123.0" lengthAdjust="spacingAndGlyphs">10,260.4L) | (76.4%)</text>
<path d="M1288.3,172.2 L1288.3,182.7 M1283.5,177.5 L1288.3,182.5 L1293.2,177.5" fill="none" stroke="#0e8a12" stroke-width="2.6"/>
<text x="1014.7" y="238.0" font-size="14.5" fill="#222" font-weight="bold" textLength="29.5" lengthAdjust="spacingAndGlyphs">BUD</text>
<use href="#rb" x="1050.0" y="228.0" width="6.58" height="9.98" style="color:#222"/>
<text x="1062.0" y="238.0" font-size="14.5" fill="#222" font-weight="bold" textLength="65.5" lengthAdjust="spacingAndGlyphs">20,132.1L</text>
<text x="1137.0" y="238.0" font-size="14.5" fill="#2b7d2b" textLength="4.0" lengthAdjust="spacingAndGlyphs">(</text>
<use href="#rr" x="1141.7" y="228.0" width="6.58" height="9.98" style="color:#2b7d2b"/>
<text x="1154.0" y="238.0" font-size="14.5" fill="#2b7d2b" textLength="123.0" lengthAdjust="spacingAndGlyphs">16,959.7L) | (84.2%)</text>
<path d="M1288.3,225.5 L1288.3,236.0 M1283.5,230.8 L1288.3,235.8 L1293.2,230.8" fill="none" stroke="#0e8a12" stroke-width="2.6"/>
<circle cx="997" cy="300.4" r="5" fill="#1e5797"/>
<text x="1005.2" y="305.3" font-size="13" fill="#444" textLength="22.6" lengthAdjust="spacingAndGlyphs">ACT</text>
<circle cx="1042.4" cy="300.4" r="5" fill="#e8e8e8"/>
<text x="1050.9" y="305.3" font-size="13" fill="#444" textLength="25.1" lengthAdjust="spacingAndGlyphs">BUD</text>
<rect x="1093.0" y="295.0" width="2.4" height="9.5" fill="#222"/>
<text x="1101.3" y="305.3" font-size="13" fill="#444" textLength="42.2" lengthAdjust="spacingAndGlyphs">ACT PY</text>
<rect x="830.8" y="334.3" width="326.2" height="34.2" fill="#e6e6e6"/>
<rect x="830.8" y="344.0" width="205.8" height="14.7" fill="#1e5797"/>
<use href="#rr" x="1042.4" y="348.0" width="6.58" height="9.98" style="color:#333"/>
<text x="1053.9" y="358.0" font-size="14.5" fill="#333" textLength="57.8" lengthAdjust="spacingAndGlyphs">6,344.8L</text>
<text x="1117.0" y="358.0" font-size="12.5" fill="#666" textLength="51.8" lengthAdjust="spacingAndGlyphs">(37.0L%)</text>
<rect x="1265.1" y="331.0" width="3.0" height="40.7" fill="#222"/>
<text x="822.7" y="400.6" font-size="12.5" fill="#444" textLength="16.8" lengthAdjust="spacingAndGlyphs">0.0</text>
<use href="#rr" x="866.4" y="392.0" width="5.68" height="8.60" style="color:#444"/>
<text x="876.4" y="400.6" font-size="12.5" fill="#444" textLength="48.4" lengthAdjust="spacingAndGlyphs">2,000.0L</text>
<use href="#rr" x="931.4" y="392.0" width="5.68" height="8.60" style="color:#444"/>
<text x="941.4" y="400.6" font-size="12.5" fill="#444" textLength="48.4" lengthAdjust="spacingAndGlyphs">4,000.0L</text>
<use href="#rr" x="996.4" y="392.0" width="5.68" height="8.60" style="color:#444"/>
<text x="1006.4" y="400.6" font-size="12.5" fill="#444" textLength="48.4" lengthAdjust="spacingAndGlyphs">6,000.0L</text>
<use href="#rr" x="1061.3" y="392.0" width="5.68" height="8.60" style="color:#444"/>
<text x="1071.3" y="400.6" font-size="12.5" fill="#444" textLength="48.4" lengthAdjust="spacingAndGlyphs">8,000.0L</text>
<use href="#rr" x="1126.3" y="392.0" width="5.68" height="8.60" style="color:#444"/>
<text x="1136.3" y="400.6" font-size="12.5" fill="#444" textLength="48.4" lengthAdjust="spacingAndGlyphs">10,000...</text>
<use href="#rr" x="1191.3" y="392.0" width="5.68" height="8.60" style="color:#444"/>
<text x="1201.3" y="400.6" font-size="12.5" fill="#444" textLength="48.4" lengthAdjust="spacingAndGlyphs">12,000...</text>
<use href="#rr" x="1256.3" y="392.0" width="5.68" height="8.60" style="color:#444"/>
<text x="1266.3" y="400.6" font-size="12.5" fill="#444" textLength="48.4" lengthAdjust="spacingAndGlyphs">14,000...</text>
<text x="813.0" y="449.1" font-size="18" fill="#1d5592" stroke="#1d5592" stroke-width="0.55" textLength="84.2" lengthAdjust="spacingAndGlyphs">ACT vs BUD</text>
<circle cx="1040.4" cy="445.3" r="5" fill="#9ac65c"/><circle cx="1053.4" cy="445.3" r="5" fill="#e65c60"/>
<text x="1065.0" y="451.3" font-size="16" fill="#333" textLength="26.6" lengthAdjust="spacingAndGlyphs">ACT</text>
<rect x="1105.5" y="443.6" width="11.0" height="2.6" fill="#222"/>
<text x="1120.8" y="451.3" font-size="16" fill="#333" textLength="30.8" lengthAdjust="spacingAndGlyphs">BUD</text>
<rect x="829.0" y="620.3" width="32.8" height="97.2" fill="#9ac65c"/>
<rect x="870.5" y="637.1" width="32.8" height="80.4" fill="#e65c60"/>
<rect x="912.1" y="583.6" width="32.8" height="133.9" fill="#9ac65c"/>
<rect x="837.1" y="634.9" width="16.6" height="3.3" fill="#111"/>
<rect x="878.6" y="509.1" width="16.6" height="3.3" fill="#111"/>
<rect x="920.2" y="515.0" width="16.6" height="3.3" fill="#111"/>
<rect x="961.7" y="608.9" width="16.6" height="3.3" fill="#111"/>
<rect x="1003.3" y="514.4" width="16.6" height="3.3" fill="#111"/>
<rect x="1044.8" y="610.6" width="16.6" height="3.3" fill="#111"/>
<rect x="1086.3" y="608.9" width="16.6" height="3.3" fill="#111"/>
<rect x="1169.4" y="528.6" width="16.6" height="3.3" fill="#111"/>
<rect x="1211.0" y="593.4" width="16.6" height="3.3" fill="#111"/>
<rect x="1252.5" y="596.9" width="16.6" height="3.3" fill="#111"/>
<rect x="1294.0" y="585.6" width="16.6" height="3.3" fill="#111"/>
<rect x="846.5" y="471.0" width="80.7" height="22.5" fill="#fdfdfd" rx="4" fill-opacity="0.9"/>
<rect x="971.3" y="476.9" width="80.4" height="22.5" fill="#fdfdfd" rx="4" fill-opacity="0.9"/>
<rect x="1096.1" y="457.0" width="80.7" height="22.5" fill="#fdfdfd" rx="4" fill-opacity="0.9"/>
<rect x="1137.5" y="490.7" width="80.5" height="22.5" fill="#fdfdfd" rx="4" fill-opacity="0.9"/>
<rect x="1185.2" y="555.3" width="68.4" height="22.5" fill="#fdfdfd" rx="4" fill-opacity="0.9"/>
<rect x="1259.1" y="548.8" width="80.3" height="22.5" fill="#fdfdfd" rx="4" fill-opacity="0.9"/>
<rect x="810.3" y="562.4" width="69.7" height="38.1" fill="#fdfdfd" rx="4" fill-opacity="0.9"/>
<rect x="810.3" y="597.4" width="69.7" height="22.5" fill="#fdfdfd" rx="4" fill-opacity="0.9"/>
<rect x="888.1" y="539.7" width="80.3" height="38.8" fill="#fdfdfd" rx="4" fill-opacity="0.9"/>
<rect x="935.0" y="571.5" width="69.7" height="22.5" fill="#fdfdfd" rx="4" fill-opacity="0.9"/>
<rect x="1018.3" y="573.0" width="70.0" height="22.5" fill="#fdfdfd" rx="4" fill-opacity="0.9"/>
<use href="#rr" x="855.0" y="477.7" width="6.81" height="10.32" style="color:#222"/>
<text x="867.0" y="488.0" font-size="15" fill="#222" textLength="52.2" lengthAdjust="spacingAndGlyphs">1,612.5L</text>
<use href="#rr" x="979.8" y="483.6" width="6.81" height="10.32" style="color:#222"/>
<text x="991.8" y="493.9" font-size="15" fill="#222" textLength="51.9" lengthAdjust="spacingAndGlyphs">1,571.1L</text>
<use href="#rr" x="1104.6" y="463.7" width="6.81" height="10.32" style="color:#222"/>
<text x="1116.6" y="474.0" font-size="15" fill="#222" textLength="52.2" lengthAdjust="spacingAndGlyphs">1,922.4L</text>
<use href="#rr" x="1146.0" y="497.4" width="6.81" height="10.32" style="color:#222"/>
<text x="1158.0" y="507.7" font-size="15" fill="#222" textLength="52.0" lengthAdjust="spacingAndGlyphs">1,460.7L</text>
<use href="#rr" x="1193.7" y="562.0" width="6.81" height="10.32" style="color:#222"/>
<text x="1205.7" y="572.3" font-size="15" fill="#222" textLength="39.9" lengthAdjust="spacingAndGlyphs">954.4L</text>
<use href="#rr" x="1267.6" y="555.5" width="6.81" height="10.32" style="color:#222"/>
<text x="1279.6" y="565.8" font-size="15" fill="#222" textLength="51.8" lengthAdjust="spacingAndGlyphs">1,014.6L</text>
<use href="#rr" x="818.8" y="569.1" width="6.81" height="10.32" style="color:#56606b"/>
<text x="830.8" y="579.4" font-size="15" fill="#56606b" textLength="41.2" lengthAdjust="spacingAndGlyphs">874.2L</text>
<text x="822.0" y="595.0" font-size="13.5" fill="#d13438" textLength="47.0" lengthAdjust="spacingAndGlyphs">-130.5%</text>
<use href="#rr" x="818.8" y="604.1" width="6.81" height="10.32" style="color:#222"/>
<text x="830.8" y="614.4" font-size="15" fill="#222" textLength="41.2" lengthAdjust="spacingAndGlyphs">628.7L</text>
<use href="#rr" x="896.6" y="546.4" width="6.81" height="10.32" style="color:#56606b"/>
<text x="908.6" y="556.7" font-size="15" fill="#56606b" textLength="51.8" lengthAdjust="spacingAndGlyphs">1,048.4L</text>
<text x="908.6" y="573.0" font-size="13.5" fill="#d13438" textLength="39.8" lengthAdjust="spacingAndGlyphs">-66.5%</text>
<use href="#rr" x="943.5" y="578.2" width="6.81" height="10.32" style="color:#222"/>
<text x="955.5" y="588.5" font-size="15" fill="#222" textLength="41.2" lengthAdjust="spacingAndGlyphs">830.0L</text>
<use href="#rr" x="1026.8" y="579.7" width="6.81" height="10.32" style="color:#222"/>
<text x="1038.8" y="590.0" font-size="15" fill="#222" textLength="41.5" lengthAdjust="spacingAndGlyphs">818.3L</text>
<text x="845.4" y="733.7" font-size="13.5" fill="#333" text-anchor="middle">Oct</text>
<text x="886.9" y="733.7" font-size="13.5" fill="#333" text-anchor="middle">Nov</text>
<text x="928.5" y="733.7" font-size="13.5" fill="#333" text-anchor="middle">Dec</text>
<text x="970.0" y="733.7" font-size="13.5" fill="#333" text-anchor="middle">Jan</text>
<text x="1011.6" y="733.7" font-size="13.5" fill="#333" text-anchor="middle">Feb</text>
<text x="1053.1" y="733.7" font-size="13.5" fill="#333" text-anchor="middle">Mar</text>
<text x="1094.6" y="733.7" font-size="13.5" fill="#333" text-anchor="middle">Apr</text>
<text x="1136.2" y="733.7" font-size="13.5" fill="#333" text-anchor="middle">May</text>
<text x="1177.7" y="733.7" font-size="13.5" fill="#333" text-anchor="middle">Jun</text>
<text x="1219.3" y="733.7" font-size="13.5" fill="#333" text-anchor="middle">Jul</text>
<text x="1260.8" y="733.7" font-size="13.5" fill="#333" text-anchor="middle">Aug</text>
<text x="1302.3" y="733.7" font-size="13.5" fill="#333" text-anchor="middle">Sep</text>
<text x="1073.8" y="753.2" font-size="13.5" fill="#333" text-anchor="middle" textLength="26.8" lengthAdjust="spacingAndGlyphs">FY25</text>
<line x1="825.3" y1="721" x2="825.3" y2="762" stroke="#c8c8c8" stroke-width="1" stroke-dasharray="1.5,2.5"/>
<line x1="1323.3" y1="721" x2="1323.3" y2="762" stroke="#c8c8c8" stroke-width="1" stroke-dasharray="1.5,2.5"/>
<text x="817.8" y="784.7" font-size="17" fill="#25609a" stroke="#25609a" stroke-width="0.55" textLength="219.5" lengthAdjust="spacingAndGlyphs">Top 3 Customers : ACT vs BUD</text>
<circle cx="1041.5" cy="803.5" r="5" fill="#1e5797"/>
<text x="1049.5" y="808.4" font-size="13" fill="#333" textLength="22.5" lengthAdjust="spacingAndGlyphs">ACT</text>
<circle cx="1083.5" cy="803.5" r="5" fill="#b4bbc5"/>
<text x="1091.0" y="808.4" font-size="13" fill="#333" textLength="25.5" lengthAdjust="spacingAndGlyphs">BUD</text>
<text x="860.1" y="869.0" font-size="13.5" fill="#222" textLength="91.6" lengthAdjust="spacingAndGlyphs">BrightHive Tech</text>
<rect x="960.9" y="845.3" width="50.1" height="18.4" fill="#1e5797"/>
<use href="#rr" x="1023.7" y="850.1" width="5.68" height="8.60" style="color:#505050"/>
<text x="1033.2" y="858.7" font-size="12.5" fill="#505050" textLength="33.5" lengthAdjust="spacingAndGlyphs">433.5L</text>
<rect x="960.9" y="863.7" width="299.0" height="17.8" fill="#b4bbc5"/>
<use href="#rr" x="1272.6" y="868.4" width="5.68" height="8.60" style="color:#b4b4b4"/>
<text x="1282.1" y="877.0" font-size="12.5" fill="#b4b4b4" textLength="42.3" lengthAdjust="spacingAndGlyphs">2,586.6L</text>
<text x="850.4" y="917.0" font-size="13.5" fill="#222" textLength="101.3" lengthAdjust="spacingAndGlyphs">SizzleSync Events</text>
<rect x="960.9" y="894.2" width="44.1" height="17.8" fill="#1e5797"/>
<use href="#rr" x="1017.8" y="898.7" width="5.68" height="8.60" style="color:#505050"/>
<text x="1027.3" y="907.3" font-size="12.5" fill="#505050" textLength="34.0" lengthAdjust="spacingAndGlyphs">384.5L</text>
<rect x="960.9" y="912.0" width="336.9" height="18.4" fill="#b4bbc5"/>
<rect x="1225.2" y="913.0" width="67.8" height="16.4" fill="#ffffff" rx="3" fill-opacity="0.85"/>
<use href="#rr" x="1233.2" y="917.4" width="5.68" height="8.60" style="color:#b4b4b4"/>
<text x="1242.7" y="926.0" font-size="12.5" fill="#b4b4b4" textLength="43.8" lengthAdjust="spacingAndGlyphs">2,918.8L</text>
<text x="826.7" y="966.0" font-size="13.5" fill="#222" textLength="125.0" lengthAdjust="spacingAndGlyphs">CrispEcho Consulting</text>
<rect x="960.9" y="942.2" width="5.9" height="18.4" fill="#1e5797"/>
<use href="#rr" x="979.3" y="947.5" width="5.68" height="8.60" style="color:#505050"/>
<text x="988.8" y="956.1" font-size="12.5" fill="#505050" textLength="28.1" lengthAdjust="spacingAndGlyphs">56.1L</text>
<text x="859.9" y="1014.2" font-size="13.5" fill="#222" textLength="91.8" lengthAdjust="spacingAndGlyphs">NovaPulse Labs</text>
<rect x="960.9" y="1009.8" width="27.8" height="17.8" fill="#b4bbc5"/>
<use href="#rr" x="1001.5" y="1014.5" width="5.68" height="8.60" style="color:#b4b4b4"/>
<text x="1011.0" y="1023.1" font-size="12.5" fill="#b4b4b4" textLength="34.3" lengthAdjust="spacingAndGlyphs">243.6L</text>
<rect x="1367.0" y="83.0" width="533.0" height="977.0" fill="#fdfdfd" rx="5" filter="url(#csh)"/>
<text x="1540.6" y="107.8" font-size="19.5" fill="#2c4a6e" stroke="#2c4a6e" stroke-width="0.55" textLength="185.0" lengthAdjust="spacingAndGlyphs">Contribution Margin</text>
<rect x="1773.2" y="95.3" width="51.6" height="29.3" fill="#ffc83d" rx="6"/>
<text x="1794.0" y="116.5" font-size="17" fill="#222" font-weight="bold" textLength="10.6" lengthAdjust="spacingAndGlyphs">#</text>
<rect x="1835.4" y="95.3" width="51.4" height="29.3" fill="#cccccc" rx="6"/>
<text x="1853.7" y="117.9" font-size="19" fill="#333" textLength="14.8" lengthAdjust="spacingAndGlyphs">%</text>
<text x="1514.6" y="130.0" font-size="13.5" fill="#222" textLength="240.1" lengthAdjust="spacingAndGlyphs">Date Range : Oct'24 - Sep'25 | MTD | INR</text>
<rect x="1387.5" y="142.0" width="491.6" height="130.5" fill="#ffffff" rx="7" filter="url(#ksh)"/>
<text x="1403.3" y="188.2" font-size="16" fill="#7a7a7a" textLength="29.0" lengthAdjust="spacingAndGlyphs">ACT</text>
<use href="#rb" x="1403.8" y="209.0" width="12.94" height="19.61" style="color:#222"/>
<text x="1427.8" y="228.6" font-size="28.5" fill="#222" font-weight="bold" textLength="102.2" lengthAdjust="spacingAndGlyphs">1,338.8L</text>
<text x="1586.3" y="184.7" font-size="14.5" fill="#222" font-weight="bold" textLength="16.2" lengthAdjust="spacingAndGlyphs">PY</text>
<use href="#rb" x="1608.3" y="174.7" width="6.58" height="9.98" style="color:#222"/>
<text x="1620.8" y="184.7" font-size="14.5" fill="#222" font-weight="bold" textLength="65.0" lengthAdjust="spacingAndGlyphs">24,768.3L</text>
<text x="1695.3" y="184.7" font-size="14.5" fill="#cf2a30" textLength="4.0" lengthAdjust="spacingAndGlyphs">(</text>
<use href="#rr" x="1700.0" y="174.7" width="6.58" height="9.98" style="color:#cf2a30"/>
<text x="1710.8" y="184.7" font-size="14.5" fill="#cf2a30" textLength="116.7" lengthAdjust="spacingAndGlyphs">9,706.6L) | (78.4%)</text>
<path d="M1838.8,172.2 L1838.8,182.7 M1834.3,177.5 L1838.8,182.5 L1843.2,177.5" fill="none" stroke="#e00a0a" stroke-width="2.6"/>
<text x="1573.3" y="239.7" font-size="14.5" fill="#222" font-weight="bold" textLength="29.2" lengthAdjust="spacingAndGlyphs">BUD</text>
<use href="#rb" x="1608.3" y="229.7" width="6.58" height="9.98" style="color:#222"/>
<text x="1621.3" y="239.7" font-size="14.5" fill="#222" font-weight="bold" textLength="64.5" lengthAdjust="spacingAndGlyphs">17,613.0L</text>
<text x="1700.8" y="239.7" font-size="14.5" fill="#cf2a30" textLength="4.0" lengthAdjust="spacingAndGlyphs">(</text>
<use href="#rr" x="1705.3" y="229.7" width="6.58" height="9.98" style="color:#cf2a30"/>
<text x="1716.7" y="239.7" font-size="14.5" fill="#cf2a30" textLength="123.8" lengthAdjust="spacingAndGlyphs">16,274.2L) | (92.4%)</text>
<path d="M1851.7,227.2 L1851.7,237.7 M1847.7,232.5 L1851.7,237.5 L1855.7,232.5" fill="none" stroke="#e00a0a" stroke-width="2.6"/>
<circle cx="1556.7" cy="300.4" r="5" fill="#1e5797"/>
<text x="1564.9" y="305.3" font-size="13" fill="#444" textLength="22.6" lengthAdjust="spacingAndGlyphs">ACT</text>
<circle cx="1602.1" cy="300.4" r="5" fill="#e8e8e8"/>
<text x="1610.6" y="305.3" font-size="13" fill="#444" textLength="25.1" lengthAdjust="spacingAndGlyphs">BUD</text>
<rect x="1652.7" y="295.0" width="2.4" height="9.5" fill="#222"/>
<text x="1661.0" y="305.3" font-size="13" fill="#444" textLength="42.2" lengthAdjust="spacingAndGlyphs">ACT PY</text>
<rect x="1390.8" y="334.3" width="160.4" height="34.2" fill="#e6e6e6"/>
<rect x="1390.8" y="344.0" width="24.2" height="14.7" fill="#1e5797"/>
<use href="#rr" x="1421.0" y="348.0" width="6.58" height="9.98" style="color:#333"/>
<text x="1432.5" y="358.0" font-size="14.5" fill="#333" textLength="58.1" lengthAdjust="spacingAndGlyphs">1,338.8L</text>
<text x="1495.5" y="358.0" font-size="12.5" fill="#666" textLength="51.8" lengthAdjust="spacingAndGlyphs">(84.8L%)</text>
<rect x="1840.4" y="331.0" width="3.0" height="40.7" fill="#222"/>
<text x="1382.7" y="400.6" font-size="12.5" fill="#444" textLength="16.8" lengthAdjust="spacingAndGlyphs">0.0</text>
<use href="#rr" x="1453.0" y="392.0" width="5.68" height="8.60" style="color:#444"/>
<text x="1463.0" y="400.6" font-size="12.5" fill="#444" textLength="47.7" lengthAdjust="spacingAndGlyphs">5,000.0L</text>
<use href="#rr" x="1540.5" y="392.0" width="5.68" height="8.60" style="color:#444"/>
<text x="1550.5" y="400.6" font-size="12.5" fill="#444" textLength="55.1" lengthAdjust="spacingAndGlyphs">10,000.0L</text>
<use href="#rr" x="1631.6" y="392.0" width="5.68" height="8.60" style="color:#444"/>
<text x="1641.6" y="400.6" font-size="12.5" fill="#444" textLength="55.4" lengthAdjust="spacingAndGlyphs">15,000.0L</text>
<use href="#rr" x="1723.0" y="392.0" width="5.68" height="8.60" style="color:#444"/>
<text x="1733.0" y="400.6" font-size="12.5" fill="#444" textLength="54.7" lengthAdjust="spacingAndGlyphs">20,000.0L</text>
<use href="#rr" x="1813.7" y="392.0" width="5.68" height="8.60" style="color:#444"/>
<text x="1823.7" y="400.6" font-size="12.5" fill="#444" textLength="54.8" lengthAdjust="spacingAndGlyphs">25,000.0L</text>
<text x="1373.0" y="449.1" font-size="18" fill="#1d5592" stroke="#1d5592" stroke-width="0.55" textLength="84.2" lengthAdjust="spacingAndGlyphs">ACT vs BUD</text>
<circle cx="1601.4" cy="445.3" r="5" fill="#9ac65c"/><circle cx="1614.7" cy="445.3" r="5" fill="#e65c60"/>
<text x="1626.4" y="451.3" font-size="16" fill="#333" textLength="26.9" lengthAdjust="spacingAndGlyphs">ACT</text>
<rect x="1666.5" y="443.6" width="11.1" height="2.6" fill="#222"/>
<text x="1682.4" y="451.3" font-size="16" fill="#333" textLength="30.2" lengthAdjust="spacingAndGlyphs">BUD</text>
<rect x="1389.0" y="677.0" width="32.8" height="40.5" fill="#e65c60"/>
<rect x="1430.6" y="497.8" width="32.8" height="219.7" fill="#9ac65c"/>
<rect x="1472.2" y="623.2" width="32.8" height="94.3" fill="#e65c60"/>
<rect x="1438.7" y="635.5" width="16.6" height="3.3" fill="#111"/>
<rect x="1480.3" y="579.4" width="16.6" height="3.3" fill="#111"/>
<rect x="1521.9" y="547.0" width="16.6" height="3.3" fill="#111"/>
<rect x="1563.5" y="643.6" width="16.6" height="3.3" fill="#111"/>
<rect x="1605.1" y="549.6" width="16.6" height="3.3" fill="#111"/>
<rect x="1646.7" y="643.0" width="16.6" height="3.3" fill="#111"/>
<rect x="1688.3" y="624.8" width="16.6" height="3.3" fill="#111"/>
<rect x="1729.9" y="577.2" width="16.6" height="3.3" fill="#111"/>
<rect x="1771.5" y="624.8" width="16.6" height="3.3" fill="#111"/>
<rect x="1813.1" y="552.9" width="16.6" height="3.3" fill="#111"/>
<rect x="1854.7" y="524.7" width="16.6" height="3.3" fill="#111"/>
<rect x="1406.5" y="459.7" width="80.5" height="39.8" fill="#fdfdfd" rx="4" fill-opacity="0.9"/>
<rect x="1490.2" y="509.3" width="80.3" height="22.5" fill="#fdfdfd" rx="4" fill-opacity="0.9"/>
<rect x="1573.5" y="512.2" width="80.3" height="22.5" fill="#fdfdfd" rx="4" fill-opacity="0.9"/>
<rect x="1819.1" y="488.0" width="80.3" height="22.5" fill="#fdfdfd" rx="4" fill-opacity="0.9"/>
<rect x="1780.9" y="516.4" width="80.3" height="22.5" fill="#fdfdfd" rx="4" fill-opacity="0.9"/>
<rect x="1448.7" y="541.7" width="80.3" height="22.5" fill="#fdfdfd" rx="4" fill-opacity="0.9"/>
<rect x="1697.5" y="539.7" width="80.5" height="22.5" fill="#fdfdfd" rx="4" fill-opacity="0.9"/>
<rect x="1453.5" y="580.3" width="69.5" height="38.7" fill="#fdfdfd" rx="4" fill-opacity="0.9"/>
<rect x="1536.9" y="606.5" width="69.3" height="22.5" fill="#fdfdfd" rx="4" fill-opacity="0.9"/>
<rect x="1619.8" y="606.2" width="69.0" height="22.5" fill="#fdfdfd" rx="4" fill-opacity="0.9"/>
<rect x="1661.9" y="587.7" width="69.1" height="22.5" fill="#fdfdfd" rx="4" fill-opacity="0.9"/>
<rect x="1745.2" y="587.7" width="69.0" height="22.5" fill="#fdfdfd" rx="4" fill-opacity="0.9"/>
<rect x="1370.3" y="634.7" width="69.7" height="39.3" fill="#fdfdfd" rx="4" fill-opacity="0.9"/>
<use href="#rr" x="1415.0" y="466.4" width="6.81" height="10.32" style="color:#56606b"/>
<text x="1427.0" y="476.7" font-size="15" fill="#56606b" textLength="52.0" lengthAdjust="spacingAndGlyphs">2,117.0L</text>
<text x="1429.0" y="494.0" font-size="13.5" fill="#8dbb43" textLength="34.7" lengthAdjust="spacingAndGlyphs">21.1%</text>
<use href="#rr" x="1498.7" y="516.0" width="6.81" height="10.32" style="color:#222"/>
<text x="1510.7" y="526.3" font-size="15" fill="#222" textLength="51.8" lengthAdjust="spacingAndGlyphs">1,574.4L</text>
<use href="#rr" x="1582.0" y="518.9" width="6.81" height="10.32" style="color:#222"/>
<text x="1594.0" y="529.2" font-size="15" fill="#222" textLength="51.8" lengthAdjust="spacingAndGlyphs">1,550.7L</text>
<use href="#rr" x="1827.6" y="494.7" width="6.81" height="10.32" style="color:#222"/>
<text x="1839.6" y="505.0" font-size="15" fill="#222" textLength="51.8" lengthAdjust="spacingAndGlyphs">1,779.0L</text>
<use href="#rr" x="1789.4" y="523.1" width="6.81" height="10.32" style="color:#222"/>
<text x="1801.4" y="533.4" font-size="15" fill="#222" textLength="51.8" lengthAdjust="spacingAndGlyphs">1,512.9L</text>
<use href="#rr" x="1457.2" y="548.4" width="6.81" height="10.32" style="color:#222"/>
<text x="1469.2" y="558.7" font-size="15" fill="#222" textLength="51.8" lengthAdjust="spacingAndGlyphs">1,269.0L</text>
<use href="#rr" x="1706.0" y="546.4" width="6.81" height="10.32" style="color:#222"/>
<text x="1718.0" y="556.7" font-size="15" fill="#222" textLength="52.0" lengthAdjust="spacingAndGlyphs">1,292.4L</text>
<use href="#rr" x="1462.0" y="587.0" width="6.81" height="10.32" style="color:#56606b"/>
<text x="1474.0" y="597.3" font-size="15" fill="#56606b" textLength="41.0" lengthAdjust="spacingAndGlyphs">878.9L</text>
<text x="1468.6" y="613.5" font-size="13.5" fill="#d13438" textLength="39.8" lengthAdjust="spacingAndGlyphs">-30.7%</text>
<use href="#rr" x="1545.4" y="613.2" width="6.81" height="10.32" style="color:#222"/>
<text x="1557.4" y="623.5" font-size="15" fill="#222" textLength="40.8" lengthAdjust="spacingAndGlyphs">665.1L</text>
<use href="#rr" x="1628.3" y="612.9" width="6.81" height="10.32" style="color:#222"/>
<text x="1640.3" y="623.2" font-size="15" fill="#222" textLength="40.5" lengthAdjust="spacingAndGlyphs">672.8L</text>
<use href="#rr" x="1670.4" y="594.4" width="6.81" height="10.32" style="color:#222"/>
<text x="1682.4" y="604.7" font-size="15" fill="#222" textLength="40.6" lengthAdjust="spacingAndGlyphs">841.3L</text>
<use href="#rr" x="1753.7" y="594.4" width="6.81" height="10.32" style="color:#222"/>
<text x="1765.7" y="604.7" font-size="15" fill="#222" textLength="40.5" lengthAdjust="spacingAndGlyphs">843.1L</text>
<use href="#rr" x="1378.8" y="641.4" width="6.81" height="10.32" style="color:#56606b"/>
<text x="1390.8" y="651.7" font-size="15" fill="#56606b" textLength="41.2" lengthAdjust="spacingAndGlyphs">370.1L</text>
<text x="1382.0" y="668.5" font-size="13.5" fill="#d13438" textLength="47.0" lengthAdjust="spacingAndGlyphs">-132.8%</text>
<text x="1405.4" y="733.7" font-size="13.5" fill="#333" text-anchor="middle">Oct</text>
<text x="1447.0" y="733.7" font-size="13.5" fill="#333" text-anchor="middle">Nov</text>
<text x="1488.6" y="733.7" font-size="13.5" fill="#333" text-anchor="middle">Dec</text>
<text x="1530.2" y="733.7" font-size="13.5" fill="#333" text-anchor="middle">Jan</text>
<text x="1571.8" y="733.7" font-size="13.5" fill="#333" text-anchor="middle">Feb</text>
<text x="1613.4" y="733.7" font-size="13.5" fill="#333" text-anchor="middle">Mar</text>
<text x="1655.0" y="733.7" font-size="13.5" fill="#333" text-anchor="middle">Apr</text>
<text x="1696.6" y="733.7" font-size="13.5" fill="#333" text-anchor="middle">May</text>
<text x="1738.2" y="733.7" font-size="13.5" fill="#333" text-anchor="middle">Jun</text>
<text x="1779.8" y="733.7" font-size="13.5" fill="#333" text-anchor="middle">Jul</text>
<text x="1821.4" y="733.7" font-size="13.5" fill="#333" text-anchor="middle">Aug</text>
<text x="1863.0" y="733.7" font-size="13.5" fill="#333" text-anchor="middle">Sep</text>
<text x="1633.8" y="753.2" font-size="13.5" fill="#333" text-anchor="middle" textLength="26.8" lengthAdjust="spacingAndGlyphs">FY25</text>
<line x1="1385.3" y1="721" x2="1385.3" y2="762" stroke="#c8c8c8" stroke-width="1" stroke-dasharray="1.5,2.5"/>
<line x1="1883.3" y1="721" x2="1883.3" y2="762" stroke="#c8c8c8" stroke-width="1" stroke-dasharray="1.5,2.5"/>
<text x="1377.8" y="786.5" font-size="17" fill="#25609a" stroke="#25609a" stroke-width="0.55" textLength="219.5" lengthAdjust="spacingAndGlyphs">Top 3 Customers : ACT vs BUD</text>
<circle cx="1600.6" cy="805.3" r="5" fill="#1e5797"/>
<text x="1608.6" y="810.2" font-size="13" fill="#333" textLength="22.5" lengthAdjust="spacingAndGlyphs">ACT</text>
<circle cx="1642.6" cy="805.3" r="5" fill="#b4bbc5"/>
<text x="1650.1" y="810.2" font-size="13" fill="#333" textLength="25.5" lengthAdjust="spacingAndGlyphs">BUD</text>
<text x="1387.3" y="869.6" font-size="13.5" fill="#222" textLength="100.7" lengthAdjust="spacingAndGlyphs">SizzleSync Events</text>
<rect x="1497.2" y="846.5" width="40.6" height="18.1" fill="#1e5797"/>
<use href="#rr" x="1550.5" y="851.5" width="5.68" height="8.60" style="color:#505050"/>
<text x="1560.0" y="860.1" font-size="12.5" fill="#505050" textLength="34.0" lengthAdjust="spacingAndGlyphs">349.1L</text>
<rect x="1497.2" y="864.6" width="355.2" height="18.4" fill="#b4bbc5"/>
<rect x="1780.1" y="865.6" width="66.9" height="16.4" fill="#ffffff" rx="3" fill-opacity="0.85"/>
<use href="#rr" x="1788.1" y="869.4" width="5.68" height="8.60" style="color:#b4b4b4"/>
<text x="1797.6" y="878.0" font-size="12.5" fill="#b4b4b4" textLength="42.4" lengthAdjust="spacingAndGlyphs">3,064.8L</text>
<text x="1397.0" y="918.5" font-size="13.5" fill="#222" textLength="91.0" lengthAdjust="spacingAndGlyphs">BrightHive Tech</text>
<rect x="1497.2" y="895.4" width="34.1" height="17.8" fill="#1e5797"/>
<use href="#rr" x="1543.7" y="900.4" width="5.68" height="8.60" style="color:#505050"/>
<text x="1553.2" y="909.0" font-size="12.5" fill="#505050" textLength="34.8" lengthAdjust="spacingAndGlyphs">293.6L</text>
<rect x="1497.2" y="913.2" width="192.6" height="18.1" fill="#b4bbc5"/>
<use href="#rr" x="1702.8" y="918.2" width="5.68" height="8.60" style="color:#b4b4b4"/>
<text x="1712.3" y="926.8" font-size="12.5" fill="#b4b4b4" textLength="42.7" lengthAdjust="spacingAndGlyphs">1,663.5L</text>
<text x="1385.2" y="966.8" font-size="13.5" fill="#222" textLength="102.8" lengthAdjust="spacingAndGlyphs">LushLens Designs</text>
<rect x="1497.2" y="943.7" width="5.6" height="17.8" fill="#1e5797"/>
<use href="#rr" x="1515.6" y="948.4" width="5.68" height="8.60" style="color:#505050"/>
<text x="1525.1" y="957.0" font-size="12.5" fill="#505050" textLength="27.5" lengthAdjust="spacingAndGlyphs">47.7L</text>
<text x="1396.4" y="1014.8" font-size="13.5" fill="#222" textLength="91.6" lengthAdjust="spacingAndGlyphs">NovaPulse Labs</text>
<rect x="1497.2" y="1011.3" width="32.6" height="17.7" fill="#b4bbc5"/>
<use href="#rr" x="1542.2" y="1016.0" width="5.68" height="8.60" style="color:#b4b4b4"/>
<text x="1551.7" y="1024.6" font-size="12.5" fill="#b4b4b4" textLength="34.1" lengthAdjust="spacingAndGlyphs">280.0L</text>
</svg></body></html>
